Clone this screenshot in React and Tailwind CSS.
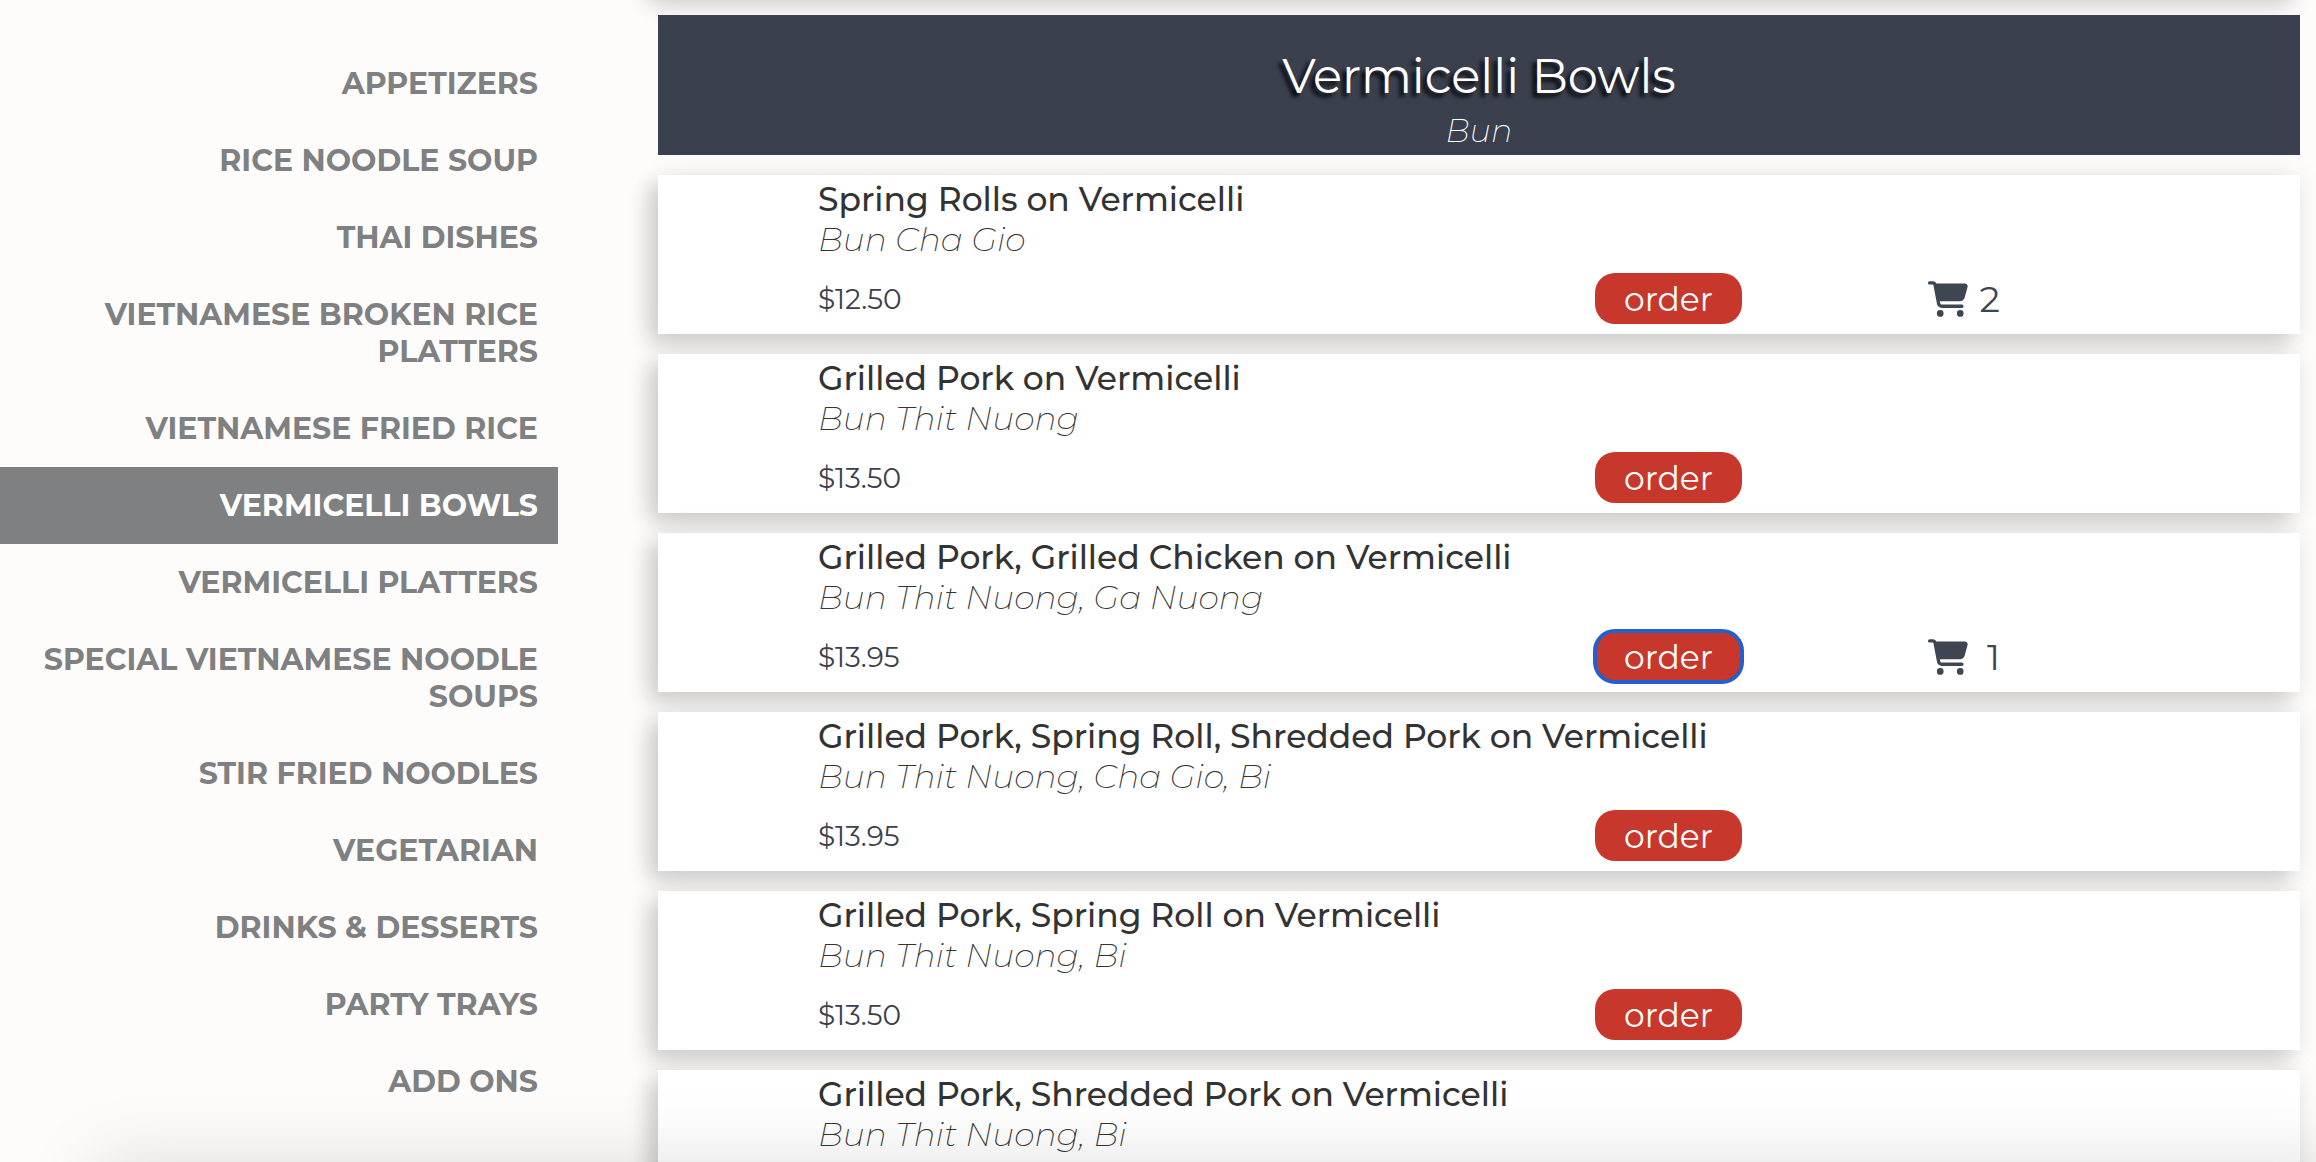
import React from "react";
import { FaCartShopping } from "react-icons/fa6";

const categories = [
  "Appetizers",
  "Rice Noodle Soup",
  "Thai Dishes",
  "Vietnamese Broken Rice Platters",
  "Vietnamese Fried Rice",
  "Vermicelli Bowls",
  "Vermicelli Platters",
  "Special Vietnamese Noodle Soups",
  "Stir Fried Noodles",
  "Vegetarian",
  "Drinks & Desserts",
  "Party Trays",
  "Add Ons",
];

const dishes = [
  { name: "Spring Rolls on Vermicelli", native: "Bun Cha Gio", price: "$12.50", count: 2 },
  { name: "Grilled Pork on Vermicelli", native: "Bun Thit Nuong", price: "$13.50" },
  { name: "Grilled Pork, Grilled Chicken on Vermicelli", native: "Bun Thit Nuong, Ga Nuong", price: "$13.95", count: 1, focused: true },
  { name: "Grilled Pork, Spring Roll, Shredded Pork on Vermicelli", native: "Bun Thit Nuong, Cha Gio, Bi", price: "$13.95" },
  { name: "Grilled Pork, Spring Roll on Vermicelli", native: "Bun Thit Nuong, Bi", price: "$13.50" },
  { name: "Grilled Pork, Shredded Pork on Vermicelli", native: "Bun Thit Nuong, Bi" },
];

const cardShadow =
  "shadow-[-10px_10px_20px_rgba(0,0,0,0.17),0_0_30px_rgba(0,0,0,0.06)]";

function Dish({ dish }) {
  return (
    <li className={`bg-white pl-40 pt-1 pb-2.5 ${cardShadow}`}>
      <h2 className="text-[33px] leading-10 font-medium text-[#333333]">{dish.name}</h2>
      <p className="text-[33px] leading-10 font-extralight italic text-[#333333]">{dish.native}</p>
      <div className="mt-3.5 grid h-[51px] grid-cols-[777px_333px_1fr] items-center">
        {dish.price && (
          <>
            <span className="text-[28px] text-[#3c404e]">{dish.price}</span>
            <button
              type="button"
              className={`h-[51px] w-[147px] rounded-[20px] bg-[#c8372b] text-[33px] leading-10 text-white ${
                dish.focused ? "outline-4 -outline-offset-2 outline-[#265fcb]" : ""
              }`}
            >
              order
            </button>
          </>
        )}
        {dish.count && (
          <span className="flex items-center gap-2 text-[#3e4652]">
            <FaCartShopping className="size-10" />
            <span className="w-6 text-right text-[36px] leading-10">{dish.count}</span>
          </span>
        )}
      </div>
    </li>
  );
}

export default function App() {
  return (
    <div className="relative flex h-screen overflow-hidden bg-[#fdfcfa] font-['Montserrat','Inter',sans-serif]">
      <nav className="w-[558px] shrink-0 pt-[45px]">
        <ul>
          {categories.map((c) => (
            <li key={c}>
              <a
                href="#menu"
                className={`block py-5 pl-8 pr-5 text-right text-[30px] leading-[37px] font-bold uppercase ${
                  c === "Vermicelli Bowls" ? "bg-[#7f8082] text-white" : "text-[#7f8082]"
                }`}
              >
                {c}
              </a>
            </li>
          ))}
        </ul>
      </nav>
      <main id="menu" className="ml-[100px] mr-4 min-w-0 flex-1">
        <div className={`-mt-[164px] h-[159px] bg-white ${cardShadow}`} />
        <header className="mt-5 flex h-[140px] flex-col items-center bg-[#3b404e] pt-8 text-white">
          <h1 className="text-[48px] leading-[58px] [text-shadow:-4px_4px_4px_#000]">Vermicelli Bowls</h1>
          <p className="mt-1.5 text-[32px] leading-10 font-extralight italic">Bun</p>
        </header>
        <ul className="mt-5 flex flex-col gap-5">
          {dishes.map((d) => (
            <Dish key={d.name} dish={d} />
          ))}
        </ul>
      </main>
      <div className="pointer-events-none absolute -right-10 left-[95px] top-full h-20 shadow-[0_0_75px_rgba(0,0,0,0.13)]" />
    </div>
  );
}
